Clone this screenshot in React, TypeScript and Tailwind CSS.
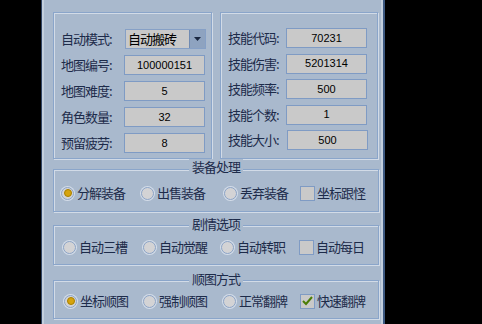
import React from 'react'

const cjk = { fontFamily: '"Noto Sans CJK SC", "Noto Sans", sans-serif' }
const num = { fontFamily: '"Liberation Sans", Arial, sans-serif' }

function Field({ label, value, labelW, shift }: { label: string; value: string; labelW: string; shift?: boolean }) {
  return (
    <div className="flex h-[20px] items-center">
      <span className={`${labelW} text-[13px] leading-[20px] tracking-[-1px] text-[#1d2b4a]`} style={cjk}>
        {label}
      </span>
      <div
        className={`flex h-[20px] w-[81px] items-center justify-center border border-[#7f9bc4] bg-[#c9c9c9] text-[11px] text-black ${shift ? 'ml-px' : ''}`}
        style={num}
      >
        {value}
      </div>
    </div>
  )
}

function Combo() {
  return (
    <div className="flex h-[20px] items-center">
      <span className="w-[64px] text-[13px] leading-[20px] tracking-[-1px] text-[#1d2b4a]" style={cjk}>
        自动模式:
      </span>
      <div className="flex h-[20px] w-[81px] items-center border border-[#86a0c6] bg-[#c9c9c9]">
        <span className="flex-1 pl-[2px] text-[13px] leading-[18px] tracking-[-1px] text-black" style={cjk}>
          自动搬砖
        </span>
        <div className="flex h-[18px] w-[16px] items-center justify-center border-l border-[#6f8ab2] bg-[#8ea3c0]">
          <svg width="7" height="4" viewBox="0 0 7 4">
            <path d="M0 0h7L3.5 4z" fill="#1a2740" />
          </svg>
        </div>
      </div>
    </div>
  )
}

function Radio({ checked }: { checked?: boolean }) {
  return (
    <span className="flex h-[13px] w-[13px] shrink-0 items-center justify-center rounded-full border border-[#8ba3c6] bg-[#d3d3d5] shadow-[0_0_0_1px_#d4dde9]">
      {checked && <span className="h-[8px] w-[8px] rounded-full border border-[#a88000] bg-[#d6a40e]" />}
    </span>
  )
}

function Check({ checked }: { checked?: boolean }) {
  return (
    <span className="flex h-[15px] w-[15px] shrink-0 items-center justify-center border border-[#7f9bc4] bg-[#c9c9c9]">
      {checked && (
        <svg width="11" height="10" viewBox="0 0 11 10">
          <path d="M1 5l3 3 6-7" fill="none" stroke="#4b7d06" strokeWidth="2" />
        </svg>
      )}
    </span>
  )
}

type Item = { text: string; kind: 'radio' | 'check'; checked?: boolean; w?: string }

function Group({ title, items, box, pad, titleTop }: { title: string; items: Item[]; box: string; pad: string; titleTop: string }) {
  return (
    <div className={`relative w-[326px] border border-[#8aa5ca] shadow-[inset_1px_1px_0_#d2dbe7,1px_1px_0_#d2dbe7] ${box}`}>
      <span
        className={`absolute left-1/2 ${titleTop} -translate-x-1/2 bg-[#a9b9cd] px-[3px] text-[13px] leading-[16px] tracking-[-1px] text-[#1d2b4a]`}
        style={cjk}
      >
        {title}
      </span>
      <div className={`flex items-center ${pad}`}>
        {items.map((it) => (
          <div key={it.text} className={`flex h-[16px] shrink-0 items-center ${it.kind === 'radio' ? 'gap-[3px]' : 'gap-[2px]'} ${it.w ?? ''}`}>
            {it.kind === 'radio' ? <Radio checked={it.checked} /> : <Check checked={it.checked} />}
            <span className="text-[13px] leading-[16px] tracking-[-1px] text-[#1d2b4a]" style={cjk}>
              {it.text}
            </span>
          </div>
        ))}
      </div>
    </div>
  )
}

export default function App() {
  return (
    <div className="flex h-[324px] w-[482px] overflow-hidden bg-black">
      <div className="w-[41px] shrink-0" />
      <div className="h-full w-[344px] shrink-0 border-l border-r-2 border-l-[#2f4363] border-r-[#3c5880] bg-[#a9b9cd]">
        <div className="h-full border-l-2 border-r-2 border-l-[#c3cfdd] border-r-[#c3cfdd] pl-[9px] pt-[12px]">
          <div className="flex gap-[8px]">
            <div className="flex h-[147px] w-[159px] flex-col gap-[6px] border border-[#8aa5ca] pl-[7px] pt-[16px] shadow-[inset_1px_1px_0_#d2dbe7,1px_1px_0_#d2dbe7]">
              <Combo />
              <Field label="地图编号:" value="100000151" labelW="w-[63px]" />
              <Field label="地图难度:" value="5" labelW="w-[63px]" />
              <Field label="角色数量:" value="32" labelW="w-[63px]" />
              <Field label="预留疲劳:" value="8" labelW="w-[63px]" />
            </div>
            <div className="flex h-[147px] w-[158px] flex-col gap-[5.5px] border border-[#8aa5ca] pl-[7px] pt-[15px] shadow-[inset_1px_1px_0_#d2dbe7,1px_1px_0_#d2dbe7]">
              <Field label="技能代码:" value="70231" labelW="w-[58px]" />
              <Field label="技能伤害:" value="5201314" labelW="w-[58px]" />
              <Field label="技能频率:" value="500" labelW="w-[58px]" />
              <Field label="技能个数:" value="1" labelW="w-[58px]" />
              <Field label="技能大小:" value="500" labelW="w-[58px]" shift />
            </div>
          </div>
          <div className="mt-[10px]">
            <Group
              title="装备处理"
              box="h-[43px]"
              pad="pl-[7px] pt-[15px]"
              titleTop="-top-[11px]"
              items={[
                { text: '分解装备', kind: 'radio', checked: true, w: 'w-[80px]' },
                { text: '出售装备', kind: 'radio', w: 'w-[83px]' },
                { text: '丢弃装备', kind: 'radio', w: 'w-[76px]' },
                { text: '坐标跟怪', kind: 'check' },
              ]}
            />
          </div>
          <div className="mt-[13px]">
            <Group
              title="剧情选项"
              box="h-[40px]"
              pad="pl-[9px] pt-[13px]"
              titleTop="-top-[10px]"
              items={[
                { text: '自动三槽', kind: 'radio', w: 'w-[80px]' },
                { text: '自动觉醒', kind: 'radio', w: 'w-[78px]' },
                { text: '自动转职', kind: 'radio', w: 'w-[78px]' },
                { text: '自动每日', kind: 'check' },
              ]}
            />
          </div>
          <div className="mt-[15px]">
            <Group
              title="顺图方式"
              box="h-[39px]"
              pad="pl-[10px] pt-[12px]"
              titleTop="-top-[10px]"
              items={[
                { text: '坐标顺图', kind: 'radio', checked: true, w: 'w-[79px]' },
                { text: '强制顺图', kind: 'radio', w: 'w-[80px]' },
                { text: '正常翻牌', kind: 'radio', w: 'w-[77px]' },
                { text: '快速翻牌', kind: 'check', checked: true },
              ]}
            />
          </div>
        </div>
      </div>
    </div>
  )
}
